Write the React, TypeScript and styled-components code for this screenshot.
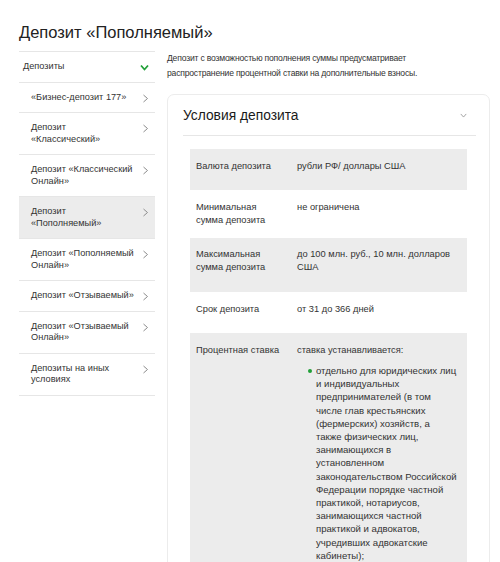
import React from "react";
import styled, { createGlobalStyle } from "styled-components";

const GRAY = {
  line: "#e6e6e6",
  fill: "#ececec",
  text: "#333333",
  icon: "#8c8c8c",
};
const GREEN = "#21a038";

const GlobalStyle = createGlobalStyle`
  body {
    margin: 0;
    background: #ffffff;
    font-family: "Liberation Sans", Arial, sans-serif;
    color: ${GRAY.text};
  }
`;

const Page = styled.div`
  padding: 21px 10px 0 19px;
  width: 500px;
  box-sizing: border-box;
  height: 562px;
  overflow: hidden;
`;

const Title = styled.h1`
  margin: 0 0 8px;
  font-size: 16.5px;
  line-height: 22px;
  font-weight: normal;
  color: #222;
`;

const Columns = styled.div`
  display: grid;
  grid-template-columns: 136px 1fr;
  column-gap: 12px;
  align-items: start;
`;

const Menu = styled.ul`
  list-style: none;
  margin: 0;
  padding: 0;
  border-top: 1px solid ${GRAY.line};
`;

const MenuItem = styled.li<{ $active?: boolean; $root?: boolean }>`
  display: flex;
  align-items: flex-start;
  justify-content: space-between;
  padding: 9px 6px 9px ${(p) => (p.$root ? "4px" : "12px")};
  border-bottom: 1px solid ${GRAY.line};
  background: ${(p) => (p.$active ? GRAY.fill : "transparent")};
  font-size: 9.2px;
  line-height: 11.5px;
  color: ${GRAY.text};
  > span {
    white-space: pre;
  }
  > svg {
    flex: none;
    margin-top: ${(p) => (p.$root ? "3px" : "2px")};
  }
`;

const Main = styled.div`
  padding-top: 0;
`;

const Lead = styled.p`
  max-width: 300px;
  margin: 0 0 13px;
  font-size: 8.6px;
  letter-spacing: -0.2px;
  line-height: 15px;
  color: ${GRAY.text};
`;

const Card = styled.section`
  border: 1px solid #ececec;
  border-radius: 7px;
  padding: 0 13px 20px 15px;
`;

const CardHead = styled.div`
  display: flex;
  align-items: center;
  justify-content: space-between;
  height: 40px;
  border-bottom: 1px solid ${GRAY.line};
  h2 {
    margin: 0;
    font-size: 13.8px;
    font-weight: normal;
    color: #1a1a1a;
  }
  svg {
    margin-right: 9px;
  }
`;

const Table = styled.div`
  margin: 13px 9px 0 7px;
`;

const Row = styled.div<{ $shaded?: boolean }>`
  display: grid;
  grid-template-columns: 101px 1fr;
  padding: 10.5px 6px;
  background: ${(p) => (p.$shaded ? GRAY.fill : "transparent")};
  font-size: 9.3px;
  line-height: 13.2px;
  color: ${GRAY.text};
  > div:first-child {
    white-space: pre-line;
  }
  p {
    margin: 0 0 7px;
  }
`;

const Bullets = styled.ul`
  list-style: none;
  margin: 0;
  padding: 0 0 0 19px;
  li {
    position: relative;
    white-space: pre-line;
    font-size: 9.6px;
  }
  li::before {
    content: "";
    position: absolute;
    left: -8px;
    top: 5px;
    width: 4px;
    height: 4px;
    border-radius: 50%;
    background: ${GREEN};
  }
`;

const Chevron = ({ dir = "right", color = GRAY.icon, size = 7, weight = 1 }: {
  dir?: "right" | "down";
  color?: string;
  size?: number;
  weight?: number;
}) =>
  dir === "right" ? (
    <svg width={size} height={size + 2} viewBox="0 0 6 9">
      <polyline points="1,1 5,4.5 1,8" fill="none" stroke={color} strokeWidth={weight} />
    </svg>
  ) : (
    <svg width={size + 2} height={size} viewBox="0 0 9 6">
      <polyline points="1,1 4.5,5 8,1" fill="none" stroke={color} strokeWidth={weight} />
    </svg>
  );

// menu labels keep the line breaks of the site menu
const deposits = [
  "«Бизнес-депозит 177»",
  "Депозит\n«Классический»",
  "Депозит «Классический\nОнлайн»",
  "Депозит\n«Пополняемый»",
  "Депозит «Пополняемый\nОнлайн»",
  "Депозит «Отзываемый»",
  "Депозит «Отзываемый\nОнлайн»",
  "Депозиты на иных\nусловиях",
];

const terms = [
  { label: "Валюта депозита", value: "рубли РФ/ доллары США" },
  { label: "Минимальная\nсумма депозита", value: "не ограничена" },
  { label: "Максимальная\nсумма депозита", value: "до 100 млн. руб., 10 млн. долларов США" },
  { label: "Срок депозита", value: "от 31 до 366 дней" },
];

const rateNote = [
  "отдельно для юридических лиц",
  "и индивидуальных",
  "предпринимателей (в том",
  "числе глав крестьянских",
  "(фермерских) хозяйств, а",
  "также физических лиц,",
  "занимающихся в",
  "установленном",
  "законодательством Российской",
  "Федерации порядке частной",
  "практикой, нотариусов,",
  "занимающихся частной",
  "практикой и адвокатов,",
  "учредивших адвокатские",
  "кабинеты);",
].join("\n");

const App = () => {
  return (
    <Page>
      <GlobalStyle />
      <Title>Депозит «Пополняемый»</Title>
      <Columns>
        <Menu>
          <MenuItem $root>
            <span>Депозиты</span>
            <Chevron dir="down" color={GREEN} size={7} weight={1.8} />
          </MenuItem>
          {deposits.map((name) => (
            <MenuItem key={name} $active={name === "Депозит\n«Пополняемый»"}>
              <span>{name}</span>
              <Chevron />
            </MenuItem>
          ))}
        </Menu>
        <Main>
          <Lead>
            Депозит с возможностью пополнения суммы предусматривает распространение процентной
            ставки на дополнительные взносы.
          </Lead>
          <Card>
            <CardHead>
              <h2>Условия депозита</h2>
              <Chevron dir="down" size={5} />
            </CardHead>
            <Table>
              {terms.map((t, i) => (
                <Row key={t.label} $shaded={i % 2 === 0}>
                  <div>{t.label}</div>
                  <div>
                    <p>{t.value}</p>
                  </div>
                </Row>
              ))}
              <Row $shaded>
                <div>Процентная ставка</div>
                <div>
                  <p>ставка устанавливается:</p>
                  <Bullets>
                    <li>{rateNote}</li>
                  </Bullets>
                </div>
              </Row>
            </Table>
          </Card>
        </Main>
      </Columns>
    </Page>
  );
};

export default App;
